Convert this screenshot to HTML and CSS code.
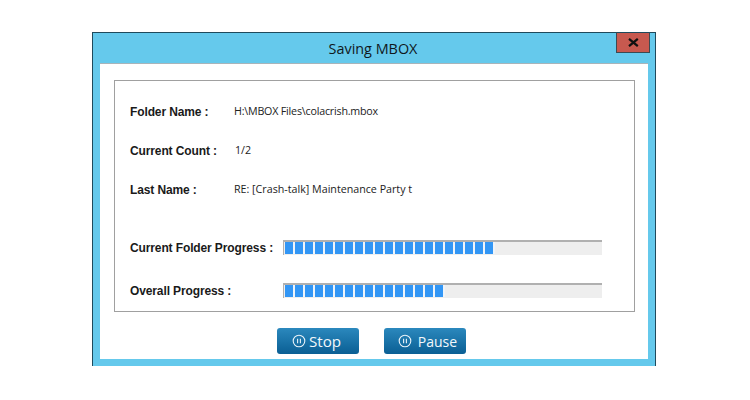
FILE: index.html
```html
<!DOCTYPE html>
<html lang="en">
<head>
<meta charset="utf-8">
<title>Saving MBOX</title>
<link rel="stylesheet" href="styles.css">
</head>
<body>
<div class="window">
  <div class="titlebar">
    <span class="title">Saving MBOX</span>
    <div class="close"><svg width="11" height="9" viewBox="0 0 11 9"><path class="close-x" d="M1 .8 9.8 8.2M9.8 .8 1 8.2"/></svg></div>
  </div>
  <div class="client">
    <div class="panel">
      <div class="info-row"><span class="label">Folder Name :</span><span class="value value-path">H:\MBOX Files\colacrish.mbox</span></div>
      <div class="info-row"><span class="label">Current Count :</span><span class="value value-count">1/2</span></div>
      <div class="info-row"><span class="label">Last Name :</span><span class="value">RE: [Crash-talk] Maintenance Party t</span></div>
      <div class="progress-row first">
        <span class="label">Current Folder Progress :</span>
        <div class="track"><div class="fill" style="width:210px"></div></div>
      </div>
      <div class="progress-row">
        <span class="label">Overall Progress :</span>
        <div class="track"><div class="fill" style="width:160px"></div></div>
      </div>
    </div>
    <div class="actions">
      <button class="btn btn-stop"><svg class="btn-icon" width="14" height="14" viewBox="0 0 14 14"><circle cx="7" cy="7" r="5.8"/><path d="M5.6 4.8v4.4M8.4 4.8v4.4"/></svg>Stop</button>
      <button class="btn btn-pause"><svg class="btn-icon" width="14" height="14" viewBox="0 0 14 14"><circle cx="7" cy="7" r="5.8"/><path d="M5.6 4.8v4.4M8.4 4.8v4.4"/></svg>Pause</button>
    </div>
  </div>
</div>
</body>
</html>
```
FILE: styles.css
```css
html, body { margin: 0; padding: 0; background: #fff; }
body { width: 750px; height: 400px; overflow: hidden; padding-top: 32px; box-sizing: border-box; }
.window {
  margin-left: 92px;
  width: 564px;
  height: 334px;
  box-sizing: border-box;
  background: #65c9ec;
  border: 1px solid #1f4a5c;
  border-bottom: 0;
  display: flex;
  flex-direction: column;
}
.titlebar {
  height: 30px;
  flex: none;
  position: relative;
  display: flex;
  justify-content: center;
  align-items: center;
}
.title { font: 14.4px "Open Sans", sans-serif; color: #10181c; position: relative; left: -1px; }
.close {
  position: absolute;
  top: -1px;
  right: 5px;
  width: 34px;
  height: 21px;
  box-sizing: border-box;
  background: #c7594f;
  border: 1px solid #3c4a52;
  border-top-color: #1f4a5c;
  display: flex;
  align-items: center;
  justify-content: center;
}
.close-x { stroke: #111; stroke-width: 2.2; fill: none; }
.client {
  margin: 0 7px;
  height: 296px;
  background: #fff;
  border-top: 1px solid #a8b4ba;
  box-sizing: border-box;
  padding: 16px 14px 0;
}
.panel {
  width: 521px;
  height: 232px;
  box-sizing: border-box;
  border: 1px solid #a0a0a0;
  padding: 11px 15px 0;
  display: flex;
  flex-direction: column;
}
.info-row { height: 39px; display: flex; align-items: center; flex: none; }
.label { font: bold 12px "Liberation Sans", sans-serif; color: #1a1a1a; letter-spacing: -0.12px; }
.info-row .label { width: 104px; flex: none; }
.value { font: 10.7px "Open Sans", sans-serif; color: #222; position: relative; top: -1px; }
.value-path { letter-spacing: -0.2px; }
.value-count { margin-left: 1px; }
.progress-row { display: flex; align-items: center; height: 15px; margin-top: 28px; }
.progress-row.first { margin-top: 31px; }
.progress-row .label { width: 153px; flex: none; }
.track {
  width: 319px;
  height: 15px;
  box-sizing: border-box;
  background: #eeeeee;
  border-top: 2px solid #b0b0b0;
  border-left: 1px solid #b0b0b0;
  padding: 0 0 1px 1px;
}
.fill {
  height: 12px;
  background: repeating-linear-gradient(90deg, #3296f5 0 8px, #eef4fa 8px 10px);
}
.actions { display: flex; margin-top: 16px; padding-left: 163px; gap: 25px; }
.btn {
  width: 82px;
  height: 26px;
  border: 0;
  border-radius: 3px;
  background: linear-gradient(#2b88bd, #0a5f94);
  color: #f2f8fb;
  font-family: "Open Sans", sans-serif;
  display: flex;
  align-items: center;
  justify-content: center;
  padding: 0;
}
.btn-stop { font-size: 15.2px; padding-right: 3px; }
.btn-pause { font-size: 14px; padding-left: 5px; }
.btn-icon { fill: none; stroke: #e8f2f8; stroke-width: 1.1; flex: none; }
.btn-stop .btn-icon { margin-right: 3px; }
.btn-pause .btn-icon { margin-right: 6px; }
```
